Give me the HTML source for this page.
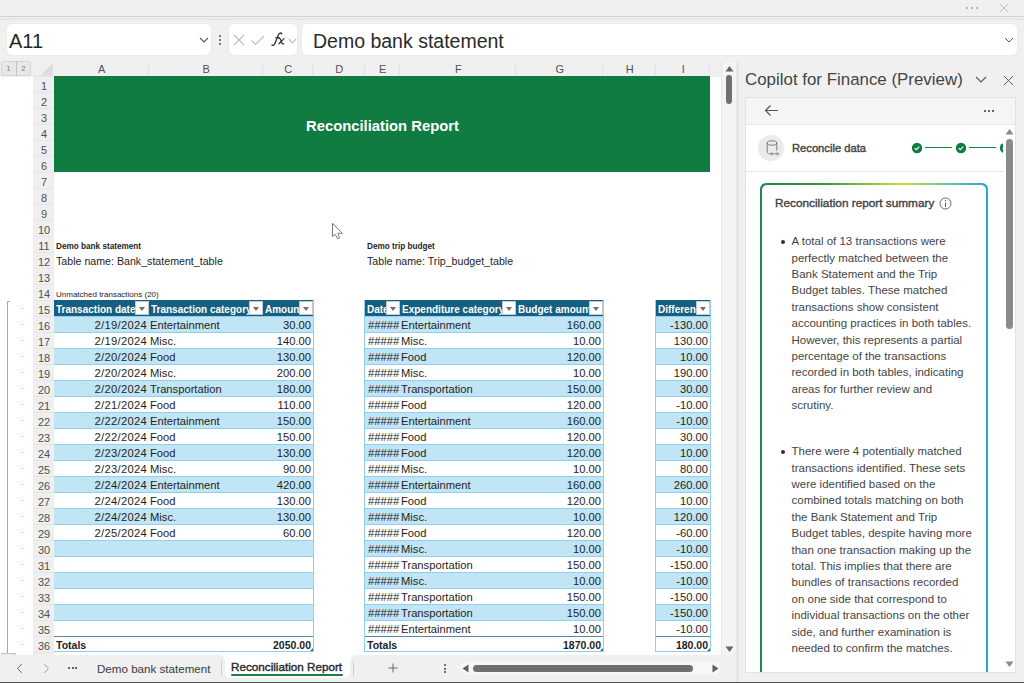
<!DOCTYPE html><html><head><meta charset='utf-8'><style>
*{margin:0;padding:0;box-sizing:border-box}
html,body{width:1024px;height:683px;overflow:hidden;background:#f0f0f0;font-family:"Liberation Sans", sans-serif;color:#242424}
.a{position:absolute;white-space:nowrap}
.cell{position:absolute;height:16px;line-height:16px;padding-top:1px;font-size:11.2px;white-space:nowrap;overflow:hidden;color:#1e1e1e}
.r{text-align:right}
.hdr{font-weight:bold;color:#fff;font-size:10px;line-height:17.5px}
.dd{position:absolute;width:14px;height:14px;background:#fff;border:1px solid #c8c8c8}
.dd:after{content:"";position:absolute;left:3px;top:5px;border-left:3.5px solid transparent;border-right:3.5px solid transparent;border-top:4px solid #707070}
.rn{position:absolute;left:33px;width:21px;height:16px;line-height:16px;padding-top:1px;font-size:11px;text-align:center;padding-left:1px;color:#505050;border-top:1px solid #e6e6e6}
.cl{position:absolute;top:62px;height:15px;line-height:15px;padding-left:1.5px;font-size:11px;text-align:center;color:#505050;border-right:1px solid #e3e3e3}
.dot{position:absolute;left:22px;width:1px;height:1px;background:#9a9a9a}
</style></head><body>
<div class="a" style="left:0;top:0;width:1024px;height:17px;background:#f0f0f0;border-bottom:1px solid #d2d2d2"></div>
<div class="a" style="left:0;top:18px;width:1024px;height:3px;background:linear-gradient(#e2e2e2,#f0f0f0)"></div>
<div class="a" style="left:966px;top:7px;width:2px;height:2px;background:#9d9d9d;border-radius:1px"></div>
<div class="a" style="left:971px;top:7px;width:2px;height:2px;background:#9d9d9d;border-radius:1px"></div>
<div class="a" style="left:976px;top:7px;width:2px;height:2px;background:#9d9d9d;border-radius:1px"></div>
<svg class="a" style="left:999px;top:3px" width="10" height="10" viewBox="0 0 10 10"><path d="M1 1L9 9M9 1L1 9" stroke="#b4b4b4" stroke-width="0.9"/></svg>
<div class="a" style="left:7px;top:24px;width:204px;height:31px;background:#fff;border-radius:5px;box-shadow:0 0 0 0.5px #e6e6e6"></div>
<div class="a" style="left:9px;top:26px;height:31px;line-height:31px;font-size:20px;color:#262626">A11</div>
<svg class="a" style="left:199px;top:37px" width="10" height="6" viewBox="0 0 10 6"><path d="M1 1L5 5L9 1" stroke="#555" stroke-width="1.1" fill="none"/></svg>
<div class="a" style="left:219px;top:35px;width:2px;height:2px;background:#555;border-radius:1px"></div>
<div class="a" style="left:219px;top:39px;width:2px;height:2px;background:#555;border-radius:1px"></div>
<div class="a" style="left:219px;top:43px;width:2px;height:2px;background:#555;border-radius:1px"></div>
<div class="a" style="left:229px;top:24px;width:68px;height:31px;background:#fff;border-radius:5px;box-shadow:0 0 0 0.5px #e6e6e6"></div>
<svg class="a" style="left:232px;top:33px" width="14" height="14" viewBox="0 0 14 14"><path d="M2 2L12 12M12 2L2 12" stroke="#bdbdbd" stroke-width="1.1"/></svg>
<svg class="a" style="left:250px;top:33px" width="16" height="14" viewBox="0 0 16 14"><path d="M1.5 7.5L5.5 11.5L14 3" stroke="#bdbdbd" stroke-width="1.1" fill="none"/></svg>
<svg class="a" style="left:268px;top:31px" width="20" height="17" viewBox="0 0 20 17"><path d="M13.8 2.8C13.2 1.8 11.4 1.6 10.6 3.2L6.9 12.6C6.3 14.2 5 14.9 3.9 14.1" stroke="#2e2e2e" stroke-width="1.3" fill="none" stroke-linecap="round"/><path d="M7.4 6.6H11.6" stroke="#2e2e2e" stroke-width="1.1"/><path d="M10.9 7.4C11.7 7.2 12.3 7.6 12.7 8.8L13.9 12.2C14.3 13.2 15 13.3 15.8 12.6M16.1 7.6C15.1 8.4 13.1 10.6 10.9 12.8" stroke="#2e2e2e" stroke-width="1.15" fill="none" stroke-linecap="round"/></svg>
<svg class="a" style="left:287.5px;top:37.5px" width="9" height="6" viewBox="0 0 9 6"><path d="M0.7 1L4.5 4.8L8.3 1" stroke="#888" stroke-width="0.9" fill="none"/></svg>
<div class="a" style="left:302px;top:24px;width:715px;height:31px;background:#fff;border-radius:5px;box-shadow:0 0 0 0.5px #e6e6e6"></div>
<div class="a" style="left:313px;top:26px;height:31px;line-height:31px;font-size:19.5px;color:#2a2a2a">Demo bank statement</div>
<svg class="a" style="left:1004px;top:37px" width="10" height="6" viewBox="0 0 10 6"><path d="M1 1L5 5L9 1" stroke="#555" stroke-width="1" fill="none"/></svg>
<div class="a" style="left:0;top:77px;width:33px;height:578px;background:#fff"></div>
<div class="a" style="left:1px;top:61px;width:30px;height:15px;background:#e8e8e8;border:1px solid #d4d4d4;border-radius:2px"></div>
<div class="a" style="left:16px;top:61px;width:1px;height:15px;background:#c4c4c4"></div>
<div class="a" style="left:1px;top:61px;width:15px;height:15px;line-height:15px;text-align:center;font-size:7px;color:#777">1</div>
<div class="a" style="left:16px;top:61px;width:15px;height:15px;line-height:15px;text-align:center;font-size:7px;color:#777">2</div>
<div class="a" style="left:33px;top:62px;width:21px;height:593px;background:#efefef"></div>
<svg class="a" style="left:40px;top:63px" width="13" height="13" viewBox="0 0 13 13"><path d="M13 0L13 13L0 13Z" fill="#dedede"/></svg>
<div class="a" style="left:54px;top:77px;width:667px;height:578px;background:#fff"></div>
<div class="cl" style="left:54px;width:95px;">A</div>
<div class="cl" style="left:149px;width:114px;">B</div>
<div class="cl" style="left:263px;width:50px;">C</div>
<div class="cl" style="left:313px;width:52px;">D</div>
<div class="cl" style="left:365px;width:35px;">E</div>
<div class="cl" style="left:400px;width:116px;">F</div>
<div class="cl" style="left:516px;width:87px;">G</div>
<div class="cl" style="left:603px;width:53px;">H</div>
<div class="cl" style="left:656px;width:54px;">I</div>
<div class="cl" style="left:710px;width:11px;border-right:none"></div>
<div class="rn" style="top:76px">1</div>
<div class="rn" style="top:92px">2</div>
<div class="rn" style="top:108px">3</div>
<div class="rn" style="top:124px">4</div>
<div class="rn" style="top:140px">5</div>
<div class="rn" style="top:156px">6</div>
<div class="rn" style="top:172px">7</div>
<div class="rn" style="top:188px">8</div>
<div class="rn" style="top:204px">9</div>
<div class="rn" style="top:220px">10</div>
<div class="rn" style="top:236px">11</div>
<div class="rn" style="top:252px">12</div>
<div class="rn" style="top:268px">13</div>
<div class="rn" style="top:284px">14</div>
<div class="rn" style="top:300px">15</div>
<div class="rn" style="top:316px">16</div>
<div class="rn" style="top:332px">17</div>
<div class="rn" style="top:348px">18</div>
<div class="rn" style="top:364px">19</div>
<div class="rn" style="top:380px">20</div>
<div class="rn" style="top:396px">21</div>
<div class="rn" style="top:412px">22</div>
<div class="rn" style="top:428px">23</div>
<div class="rn" style="top:444px">24</div>
<div class="rn" style="top:460px">25</div>
<div class="rn" style="top:476px">26</div>
<div class="rn" style="top:492px">27</div>
<div class="rn" style="top:508px">28</div>
<div class="rn" style="top:524px">29</div>
<div class="rn" style="top:540px">30</div>
<div class="rn" style="top:556px">31</div>
<div class="rn" style="top:572px">32</div>
<div class="rn" style="top:588px">33</div>
<div class="rn" style="top:604px">34</div>
<div class="rn" style="top:620px">35</div>
<div class="rn" style="top:636px">36</div>
<div class="rn" style="top:652px">37</div>
<div class="a" style="left:54px;top:76px;width:656px;height:96px;background:#107c41"></div>
<div class="a" style="left:54px;top:76px;width:656px;height:96px;line-height:96px;text-align:center;font-weight:bold;font-size:14.8px;color:#fff;padding-left:1px;padding-top:1.5px">Reconciliation Report</div>
<div class="cell" style="left:56px;top:238px;font-size:8.2px;font-weight:bold">Demo bank statement</div>
<div class="cell" style="left:56px;top:252px;font-size:10.65px">Table name: Bank_statement_table</div>
<div class="cell" style="left:56px;top:285.5px;font-size:8px">Unmatched transactions (20)</div>
<div class="cell" style="left:367px;top:238px;font-size:8.2px;font-weight:bold">Demo trip budget</div>
<div class="cell" style="left:367px;top:252px;font-size:10.65px">Table name: Trip_budget_table</div>
<div class="a" style="left:54px;top:300px;width:259px;height:16px;background:#156082"></div>
<div class="cell hdr" style="left:56px;top:300px;width:92px">Transaction date</div>
<div class="dd" style="left:135px;top:301px"></div>
<div class="cell hdr" style="left:151px;top:300px;width:111px">Transaction category</div>
<div class="dd" style="left:249px;top:301px"></div>
<div class="cell hdr" style="left:265px;top:300px;width:47px">Amount</div>
<div class="dd" style="left:299px;top:301px"></div>
<div class="a" style="left:54px;top:316px;width:259px;height:16px;background:#c1e5f5;border-top:1px solid #8fd0ef"></div>
<div class="cell r" style="left:54px;top:316px;width:93px"><span style="letter-spacing:0.3px">2/19/2024</span></div>
<div class="cell" style="left:150px;top:316px;width:112px">Entertainment</div>
<div class="cell r" style="left:263px;top:316px;width:48px">30.00</div>
<div class="a" style="left:54px;top:332px;width:259px;height:16px;background:#fff;border-top:1px solid #8fd0ef"></div>
<div class="cell r" style="left:54px;top:332px;width:93px"><span style="letter-spacing:0.3px">2/19/2024</span></div>
<div class="cell" style="left:150px;top:332px;width:112px">Misc.</div>
<div class="cell r" style="left:263px;top:332px;width:48px">140.00</div>
<div class="a" style="left:54px;top:348px;width:259px;height:16px;background:#c1e5f5;border-top:1px solid #8fd0ef"></div>
<div class="cell r" style="left:54px;top:348px;width:93px"><span style="letter-spacing:0.3px">2/20/2024</span></div>
<div class="cell" style="left:150px;top:348px;width:112px">Food</div>
<div class="cell r" style="left:263px;top:348px;width:48px">130.00</div>
<div class="a" style="left:54px;top:364px;width:259px;height:16px;background:#fff;border-top:1px solid #8fd0ef"></div>
<div class="cell r" style="left:54px;top:364px;width:93px"><span style="letter-spacing:0.3px">2/20/2024</span></div>
<div class="cell" style="left:150px;top:364px;width:112px">Misc.</div>
<div class="cell r" style="left:263px;top:364px;width:48px">200.00</div>
<div class="a" style="left:54px;top:380px;width:259px;height:16px;background:#c1e5f5;border-top:1px solid #8fd0ef"></div>
<div class="cell r" style="left:54px;top:380px;width:93px"><span style="letter-spacing:0.3px">2/20/2024</span></div>
<div class="cell" style="left:150px;top:380px;width:112px">Transportation</div>
<div class="cell r" style="left:263px;top:380px;width:48px">180.00</div>
<div class="a" style="left:54px;top:396px;width:259px;height:16px;background:#fff;border-top:1px solid #8fd0ef"></div>
<div class="cell r" style="left:54px;top:396px;width:93px"><span style="letter-spacing:0.3px">2/21/2024</span></div>
<div class="cell" style="left:150px;top:396px;width:112px">Food</div>
<div class="cell r" style="left:263px;top:396px;width:48px">110.00</div>
<div class="a" style="left:54px;top:412px;width:259px;height:16px;background:#c1e5f5;border-top:1px solid #8fd0ef"></div>
<div class="cell r" style="left:54px;top:412px;width:93px"><span style="letter-spacing:0.3px">2/22/2024</span></div>
<div class="cell" style="left:150px;top:412px;width:112px">Entertainment</div>
<div class="cell r" style="left:263px;top:412px;width:48px">150.00</div>
<div class="a" style="left:54px;top:428px;width:259px;height:16px;background:#fff;border-top:1px solid #8fd0ef"></div>
<div class="cell r" style="left:54px;top:428px;width:93px"><span style="letter-spacing:0.3px">2/22/2024</span></div>
<div class="cell" style="left:150px;top:428px;width:112px">Food</div>
<div class="cell r" style="left:263px;top:428px;width:48px">150.00</div>
<div class="a" style="left:54px;top:444px;width:259px;height:16px;background:#c1e5f5;border-top:1px solid #8fd0ef"></div>
<div class="cell r" style="left:54px;top:444px;width:93px"><span style="letter-spacing:0.3px">2/23/2024</span></div>
<div class="cell" style="left:150px;top:444px;width:112px">Food</div>
<div class="cell r" style="left:263px;top:444px;width:48px">130.00</div>
<div class="a" style="left:54px;top:460px;width:259px;height:16px;background:#fff;border-top:1px solid #8fd0ef"></div>
<div class="cell r" style="left:54px;top:460px;width:93px"><span style="letter-spacing:0.3px">2/23/2024</span></div>
<div class="cell" style="left:150px;top:460px;width:112px">Misc.</div>
<div class="cell r" style="left:263px;top:460px;width:48px">90.00</div>
<div class="a" style="left:54px;top:476px;width:259px;height:16px;background:#c1e5f5;border-top:1px solid #8fd0ef"></div>
<div class="cell r" style="left:54px;top:476px;width:93px"><span style="letter-spacing:0.3px">2/24/2024</span></div>
<div class="cell" style="left:150px;top:476px;width:112px">Entertainment</div>
<div class="cell r" style="left:263px;top:476px;width:48px">420.00</div>
<div class="a" style="left:54px;top:492px;width:259px;height:16px;background:#fff;border-top:1px solid #8fd0ef"></div>
<div class="cell r" style="left:54px;top:492px;width:93px"><span style="letter-spacing:0.3px">2/24/2024</span></div>
<div class="cell" style="left:150px;top:492px;width:112px">Food</div>
<div class="cell r" style="left:263px;top:492px;width:48px">130.00</div>
<div class="a" style="left:54px;top:508px;width:259px;height:16px;background:#c1e5f5;border-top:1px solid #8fd0ef"></div>
<div class="cell r" style="left:54px;top:508px;width:93px"><span style="letter-spacing:0.3px">2/24/2024</span></div>
<div class="cell" style="left:150px;top:508px;width:112px">Misc.</div>
<div class="cell r" style="left:263px;top:508px;width:48px">130.00</div>
<div class="a" style="left:54px;top:524px;width:259px;height:16px;background:#fff;border-top:1px solid #8fd0ef"></div>
<div class="cell r" style="left:54px;top:524px;width:93px"><span style="letter-spacing:0.3px">2/25/2024</span></div>
<div class="cell" style="left:150px;top:524px;width:112px">Food</div>
<div class="cell r" style="left:263px;top:524px;width:48px">60.00</div>
<div class="a" style="left:54px;top:540px;width:259px;height:16px;background:#c1e5f5;border-top:1px solid #8fd0ef"></div>
<div class="a" style="left:54px;top:556px;width:259px;height:16px;background:#fff;border-top:1px solid #8fd0ef"></div>
<div class="a" style="left:54px;top:572px;width:259px;height:16px;background:#c1e5f5;border-top:1px solid #8fd0ef"></div>
<div class="a" style="left:54px;top:588px;width:259px;height:16px;background:#fff;border-top:1px solid #8fd0ef"></div>
<div class="a" style="left:54px;top:604px;width:259px;height:16px;background:#c1e5f5;border-top:1px solid #8fd0ef"></div>
<div class="a" style="left:54px;top:620px;width:259px;height:16px;background:#fff;border-top:1px solid #8fd0ef"></div>
<div class="a" style="left:54px;top:636px;width:259px;height:16px;background:#fff;border-top:1px solid #5a86a0;border-bottom:1px solid #8fd0ef"></div>
<div class="cell" style="left:56px;top:636px;width:93px;font-weight:bold;font-size:10.5px">Totals</div>
<div class="cell r" style="left:263px;top:636px;width:48px;font-weight:bold;font-size:10.5px">2050.00</div>
<div class="a" style="left:313px;top:300px;width:1px;height:352px;background:#8fd0ef"></div>
<div class="a" style="left:310px;top:648px;width:0;height:0;border-left:3px solid transparent;border-bottom:3px solid #2f6ea8"></div>
<div class="a" style="left:365px;top:300px;width:238px;height:16px;background:#156082"></div>
<div class="cell hdr" style="left:367px;top:300px;width:32px">Date</div>
<div class="dd" style="left:386px;top:301px"></div>
<div class="cell hdr" style="left:402px;top:300px;width:113px">Expenditure category</div>
<div class="dd" style="left:502px;top:301px"></div>
<div class="cell hdr" style="left:518px;top:300px;width:84px">Budget amount</div>
<div class="dd" style="left:589px;top:301px"></div>
<div class="a" style="left:365px;top:316px;width:238px;height:16px;background:#c1e5f5;border-top:1px solid #8fd0ef"></div>
<div class="cell" style="left:368px;top:316px;width:33px">#####</div>
<div class="cell" style="left:401px;top:316px;width:114px">Entertainment</div>
<div class="cell r" style="left:516px;top:316px;width:85px">160.00</div>
<div class="a" style="left:365px;top:332px;width:238px;height:16px;background:#fff;border-top:1px solid #8fd0ef"></div>
<div class="cell" style="left:368px;top:332px;width:33px">#####</div>
<div class="cell" style="left:401px;top:332px;width:114px">Misc.</div>
<div class="cell r" style="left:516px;top:332px;width:85px">10.00</div>
<div class="a" style="left:365px;top:348px;width:238px;height:16px;background:#c1e5f5;border-top:1px solid #8fd0ef"></div>
<div class="cell" style="left:368px;top:348px;width:33px">#####</div>
<div class="cell" style="left:401px;top:348px;width:114px">Food</div>
<div class="cell r" style="left:516px;top:348px;width:85px">120.00</div>
<div class="a" style="left:365px;top:364px;width:238px;height:16px;background:#fff;border-top:1px solid #8fd0ef"></div>
<div class="cell" style="left:368px;top:364px;width:33px">#####</div>
<div class="cell" style="left:401px;top:364px;width:114px">Misc.</div>
<div class="cell r" style="left:516px;top:364px;width:85px">10.00</div>
<div class="a" style="left:365px;top:380px;width:238px;height:16px;background:#c1e5f5;border-top:1px solid #8fd0ef"></div>
<div class="cell" style="left:368px;top:380px;width:33px">#####</div>
<div class="cell" style="left:401px;top:380px;width:114px">Transportation</div>
<div class="cell r" style="left:516px;top:380px;width:85px">150.00</div>
<div class="a" style="left:365px;top:396px;width:238px;height:16px;background:#fff;border-top:1px solid #8fd0ef"></div>
<div class="cell" style="left:368px;top:396px;width:33px">#####</div>
<div class="cell" style="left:401px;top:396px;width:114px">Food</div>
<div class="cell r" style="left:516px;top:396px;width:85px">120.00</div>
<div class="a" style="left:365px;top:412px;width:238px;height:16px;background:#c1e5f5;border-top:1px solid #8fd0ef"></div>
<div class="cell" style="left:368px;top:412px;width:33px">#####</div>
<div class="cell" style="left:401px;top:412px;width:114px">Entertainment</div>
<div class="cell r" style="left:516px;top:412px;width:85px">160.00</div>
<div class="a" style="left:365px;top:428px;width:238px;height:16px;background:#fff;border-top:1px solid #8fd0ef"></div>
<div class="cell" style="left:368px;top:428px;width:33px">#####</div>
<div class="cell" style="left:401px;top:428px;width:114px">Food</div>
<div class="cell r" style="left:516px;top:428px;width:85px">120.00</div>
<div class="a" style="left:365px;top:444px;width:238px;height:16px;background:#c1e5f5;border-top:1px solid #8fd0ef"></div>
<div class="cell" style="left:368px;top:444px;width:33px">#####</div>
<div class="cell" style="left:401px;top:444px;width:114px">Food</div>
<div class="cell r" style="left:516px;top:444px;width:85px">120.00</div>
<div class="a" style="left:365px;top:460px;width:238px;height:16px;background:#fff;border-top:1px solid #8fd0ef"></div>
<div class="cell" style="left:368px;top:460px;width:33px">#####</div>
<div class="cell" style="left:401px;top:460px;width:114px">Misc.</div>
<div class="cell r" style="left:516px;top:460px;width:85px">10.00</div>
<div class="a" style="left:365px;top:476px;width:238px;height:16px;background:#c1e5f5;border-top:1px solid #8fd0ef"></div>
<div class="cell" style="left:368px;top:476px;width:33px">#####</div>
<div class="cell" style="left:401px;top:476px;width:114px">Entertainment</div>
<div class="cell r" style="left:516px;top:476px;width:85px">160.00</div>
<div class="a" style="left:365px;top:492px;width:238px;height:16px;background:#fff;border-top:1px solid #8fd0ef"></div>
<div class="cell" style="left:368px;top:492px;width:33px">#####</div>
<div class="cell" style="left:401px;top:492px;width:114px">Food</div>
<div class="cell r" style="left:516px;top:492px;width:85px">120.00</div>
<div class="a" style="left:365px;top:508px;width:238px;height:16px;background:#c1e5f5;border-top:1px solid #8fd0ef"></div>
<div class="cell" style="left:368px;top:508px;width:33px">#####</div>
<div class="cell" style="left:401px;top:508px;width:114px">Misc.</div>
<div class="cell r" style="left:516px;top:508px;width:85px">10.00</div>
<div class="a" style="left:365px;top:524px;width:238px;height:16px;background:#fff;border-top:1px solid #8fd0ef"></div>
<div class="cell" style="left:368px;top:524px;width:33px">#####</div>
<div class="cell" style="left:401px;top:524px;width:114px">Food</div>
<div class="cell r" style="left:516px;top:524px;width:85px">120.00</div>
<div class="a" style="left:365px;top:540px;width:238px;height:16px;background:#c1e5f5;border-top:1px solid #8fd0ef"></div>
<div class="cell" style="left:368px;top:540px;width:33px">#####</div>
<div class="cell" style="left:401px;top:540px;width:114px">Misc.</div>
<div class="cell r" style="left:516px;top:540px;width:85px">10.00</div>
<div class="a" style="left:365px;top:556px;width:238px;height:16px;background:#fff;border-top:1px solid #8fd0ef"></div>
<div class="cell" style="left:368px;top:556px;width:33px">#####</div>
<div class="cell" style="left:401px;top:556px;width:114px">Transportation</div>
<div class="cell r" style="left:516px;top:556px;width:85px">150.00</div>
<div class="a" style="left:365px;top:572px;width:238px;height:16px;background:#c1e5f5;border-top:1px solid #8fd0ef"></div>
<div class="cell" style="left:368px;top:572px;width:33px">#####</div>
<div class="cell" style="left:401px;top:572px;width:114px">Misc.</div>
<div class="cell r" style="left:516px;top:572px;width:85px">10.00</div>
<div class="a" style="left:365px;top:588px;width:238px;height:16px;background:#fff;border-top:1px solid #8fd0ef"></div>
<div class="cell" style="left:368px;top:588px;width:33px">#####</div>
<div class="cell" style="left:401px;top:588px;width:114px">Transportation</div>
<div class="cell r" style="left:516px;top:588px;width:85px">150.00</div>
<div class="a" style="left:365px;top:604px;width:238px;height:16px;background:#c1e5f5;border-top:1px solid #8fd0ef"></div>
<div class="cell" style="left:368px;top:604px;width:33px">#####</div>
<div class="cell" style="left:401px;top:604px;width:114px">Transportation</div>
<div class="cell r" style="left:516px;top:604px;width:85px">150.00</div>
<div class="a" style="left:365px;top:620px;width:238px;height:16px;background:#fff;border-top:1px solid #8fd0ef"></div>
<div class="cell" style="left:368px;top:620px;width:33px">#####</div>
<div class="cell" style="left:401px;top:620px;width:114px">Entertainment</div>
<div class="cell r" style="left:516px;top:620px;width:85px">10.00</div>
<div class="a" style="left:365px;top:636px;width:238px;height:16px;background:#fff;border-top:1px solid #5a86a0;border-bottom:1px solid #8fd0ef"></div>
<div class="cell" style="left:367px;top:636px;width:33px;font-weight:bold;font-size:10.5px">Totals</div>
<div class="cell r" style="left:516px;top:636px;width:85px;font-weight:bold;font-size:10.5px">1870.00</div>
<div class="a" style="left:364px;top:300px;width:1px;height:352px;background:#8fd0ef"></div>
<div class="a" style="left:603px;top:300px;width:1px;height:352px;background:#8fd0ef"></div>
<div class="a" style="left:600px;top:648px;width:0;height:0;border-left:3px solid transparent;border-bottom:3px solid #2f6ea8"></div>
<div class="a" style="left:656px;top:300px;width:54px;height:16px;background:#156082"></div>
<div class="cell hdr" style="left:658px;top:300px;width:51px">Difference</div>
<div class="dd" style="left:696px;top:301px"></div>
<div class="a" style="left:656px;top:316px;width:54px;height:16px;background:#c1e5f5;border-top:1px solid #8fd0ef"></div>
<div class="cell r" style="left:656px;top:316px;width:52px">-130.00</div>
<div class="a" style="left:656px;top:332px;width:54px;height:16px;background:#fff;border-top:1px solid #8fd0ef"></div>
<div class="cell r" style="left:656px;top:332px;width:52px">130.00</div>
<div class="a" style="left:656px;top:348px;width:54px;height:16px;background:#c1e5f5;border-top:1px solid #8fd0ef"></div>
<div class="cell r" style="left:656px;top:348px;width:52px">10.00</div>
<div class="a" style="left:656px;top:364px;width:54px;height:16px;background:#fff;border-top:1px solid #8fd0ef"></div>
<div class="cell r" style="left:656px;top:364px;width:52px">190.00</div>
<div class="a" style="left:656px;top:380px;width:54px;height:16px;background:#c1e5f5;border-top:1px solid #8fd0ef"></div>
<div class="cell r" style="left:656px;top:380px;width:52px">30.00</div>
<div class="a" style="left:656px;top:396px;width:54px;height:16px;background:#fff;border-top:1px solid #8fd0ef"></div>
<div class="cell r" style="left:656px;top:396px;width:52px">-10.00</div>
<div class="a" style="left:656px;top:412px;width:54px;height:16px;background:#c1e5f5;border-top:1px solid #8fd0ef"></div>
<div class="cell r" style="left:656px;top:412px;width:52px">-10.00</div>
<div class="a" style="left:656px;top:428px;width:54px;height:16px;background:#fff;border-top:1px solid #8fd0ef"></div>
<div class="cell r" style="left:656px;top:428px;width:52px">30.00</div>
<div class="a" style="left:656px;top:444px;width:54px;height:16px;background:#c1e5f5;border-top:1px solid #8fd0ef"></div>
<div class="cell r" style="left:656px;top:444px;width:52px">10.00</div>
<div class="a" style="left:656px;top:460px;width:54px;height:16px;background:#fff;border-top:1px solid #8fd0ef"></div>
<div class="cell r" style="left:656px;top:460px;width:52px">80.00</div>
<div class="a" style="left:656px;top:476px;width:54px;height:16px;background:#c1e5f5;border-top:1px solid #8fd0ef"></div>
<div class="cell r" style="left:656px;top:476px;width:52px">260.00</div>
<div class="a" style="left:656px;top:492px;width:54px;height:16px;background:#fff;border-top:1px solid #8fd0ef"></div>
<div class="cell r" style="left:656px;top:492px;width:52px">10.00</div>
<div class="a" style="left:656px;top:508px;width:54px;height:16px;background:#c1e5f5;border-top:1px solid #8fd0ef"></div>
<div class="cell r" style="left:656px;top:508px;width:52px">120.00</div>
<div class="a" style="left:656px;top:524px;width:54px;height:16px;background:#fff;border-top:1px solid #8fd0ef"></div>
<div class="cell r" style="left:656px;top:524px;width:52px">-60.00</div>
<div class="a" style="left:656px;top:540px;width:54px;height:16px;background:#c1e5f5;border-top:1px solid #8fd0ef"></div>
<div class="cell r" style="left:656px;top:540px;width:52px">-10.00</div>
<div class="a" style="left:656px;top:556px;width:54px;height:16px;background:#fff;border-top:1px solid #8fd0ef"></div>
<div class="cell r" style="left:656px;top:556px;width:52px">-150.00</div>
<div class="a" style="left:656px;top:572px;width:54px;height:16px;background:#c1e5f5;border-top:1px solid #8fd0ef"></div>
<div class="cell r" style="left:656px;top:572px;width:52px">-10.00</div>
<div class="a" style="left:656px;top:588px;width:54px;height:16px;background:#fff;border-top:1px solid #8fd0ef"></div>
<div class="cell r" style="left:656px;top:588px;width:52px">-150.00</div>
<div class="a" style="left:656px;top:604px;width:54px;height:16px;background:#c1e5f5;border-top:1px solid #8fd0ef"></div>
<div class="cell r" style="left:656px;top:604px;width:52px">-150.00</div>
<div class="a" style="left:656px;top:620px;width:54px;height:16px;background:#fff;border-top:1px solid #8fd0ef"></div>
<div class="cell r" style="left:656px;top:620px;width:52px">-10.00</div>
<div class="a" style="left:656px;top:636px;width:54px;height:16px;background:#fff;border-top:1px solid #5a86a0;border-bottom:1px solid #8fd0ef"></div>
<div class="cell r" style="left:656px;top:636px;width:52px;font-weight:bold;font-size:10.5px">180.00</div>
<div class="a" style="left:655px;top:300px;width:1px;height:352px;background:#8fd0ef"></div>
<div class="a" style="left:710px;top:300px;width:1px;height:352px;background:#8fd0ef"></div>
<div class="a" style="left:707px;top:648px;width:0;height:0;border-left:3px solid transparent;border-bottom:3px solid #2f6ea8"></div>
<div class="a" style="left:7px;top:301px;width:1px;height:353px;background:#a8a8a8"></div>
<div class="a" style="left:7px;top:301px;width:3px;height:1px;background:#a8a8a8"></div>
<div class="a" style="left:1px;top:653px;width:15px;height:4px;border:1px solid #c8c8c8;border-bottom:none;background:#ececec"></div>
<div class="dot" style="top:308px"></div>
<div class="dot" style="top:324px"></div>
<div class="dot" style="top:340px"></div>
<div class="dot" style="top:356px"></div>
<div class="dot" style="top:372px"></div>
<div class="dot" style="top:388px"></div>
<div class="dot" style="top:404px"></div>
<div class="dot" style="top:420px"></div>
<div class="dot" style="top:436px"></div>
<div class="dot" style="top:452px"></div>
<div class="dot" style="top:468px"></div>
<div class="dot" style="top:484px"></div>
<div class="dot" style="top:500px"></div>
<div class="dot" style="top:516px"></div>
<div class="dot" style="top:532px"></div>
<div class="dot" style="top:548px"></div>
<div class="dot" style="top:564px"></div>
<div class="dot" style="top:580px"></div>
<div class="dot" style="top:596px"></div>
<div class="dot" style="top:612px"></div>
<div class="dot" style="top:628px"></div>
<div class="dot" style="top:644px"></div>
<svg class="a" style="left:330px;top:221px" width="16" height="20" viewBox="0 0 16 20"><path d="M2.5 2.3L2.5 15.5L5.2 13.3L7.6 17.8L9.6 17L7.9 12.3L12.4 12.3Z" fill="#fff" stroke="#6a6a6a" stroke-width="0.9" stroke-linejoin="round"/></svg>
<div class="a" style="left:721px;top:62px;width:15px;height:593px;background:#f4f4f4;border-radius:0 0 7px 7px"></div>
<div class="a" style="left:720.5px;top:62px;width:1px;height:592px;background:#e6e6e6"></div>
<svg class="a" style="left:724.5px;top:64.5px" width="9" height="7" viewBox="0 0 9 7"><path d="M0.5 6.5L4.5 1L8.5 6.5Z" fill="#666"/></svg>
<div class="a" style="left:726px;top:75px;width:6px;height:29px;background:#707070;border-radius:3px"></div>
<svg class="a" style="left:724.5px;top:646px" width="9" height="7" viewBox="0 0 9 7"><path d="M0.5 0.5L4.5 6L8.5 0.5Z" fill="#666"/></svg>
<div class="a" style="left:54px;top:653px;width:667px;height:10px;background:#fff"></div>
<div class="a" style="left:215px;top:668px;width:145px;height:14px;background:#f0f0f0"></div>
<div class="a" style="left:225px;top:655px;width:125px;height:23px;background:#fff;border-radius:0 0 6px 6px"></div>
<div class="a" style="left:0;top:655px;width:225px;height:27px;background:#f0f0f0;border-radius:0 6px 0 0"></div>
<div class="a" style="left:350px;top:655px;width:387px;height:27px;background:#f0f0f0;border-radius:6px 0 0 0"></div>
<div class="a" style="left:0;top:681.5px;width:1024px;height:1.5px;background:#505050"></div>
<svg class="a" style="left:16px;top:663px" width="7" height="11" viewBox="0 0 7 11"><path d="M5.8 1L1.5 5.5L5.8 10" stroke="#6a6a6a" stroke-width="1" fill="none"/></svg>
<svg class="a" style="left:43px;top:663px" width="7" height="11" viewBox="0 0 7 11"><path d="M1.2 1L5.5 5.5L1.2 10" stroke="#a0a0a0" stroke-width="1" fill="none"/></svg>
<div class="a" style="left:68px;top:667px;width:2px;height:2px;background:#333;border-radius:1px"></div>
<div class="a" style="left:71.5px;top:667px;width:2px;height:2px;background:#333;border-radius:1px"></div>
<div class="a" style="left:75px;top:667px;width:2px;height:2px;background:#333;border-radius:1px"></div>
<div class="a" style="left:97px;top:661px;line-height:16px;font-size:11.6px;color:#3a3a3a">Demo bank statement</div>
<div class="a" style="left:221px;top:661px;width:1px;height:15px;background:#cfcfcf"></div>
<div class="a" style="left:231px;top:659px;line-height:16px;font-size:11.7px;color:#2a2a2a;-webkit-text-stroke:0.4px #2a2a2a">Reconciliation Report</div>
<div class="a" style="left:231px;top:674px;width:112px;height:2px;background:#1a8048;border-radius:1px"></div>
<div class="a" style="left:353px;top:661px;width:1px;height:15px;background:#cfcfcf"></div>
<svg class="a" style="left:388px;top:663px" width="10" height="10" viewBox="0 0 10 10"><path d="M5 0.5V9.5M0.5 5H9.5" stroke="#666" stroke-width="1"/></svg>
<div class="a" style="left:444px;top:664px;width:2px;height:2px;background:#444;border-radius:1px"></div>
<div class="a" style="left:444px;top:667.5px;width:2px;height:2px;background:#444;border-radius:1px"></div>
<div class="a" style="left:444px;top:671px;width:2px;height:2px;background:#444;border-radius:1px"></div>
<div class="a" style="left:460px;top:662px;width:261px;height:13px;background:#f7f7f7;border-radius:6.5px"></div>
<svg class="a" style="left:462px;top:664px" width="7" height="9" viewBox="0 0 7 9"><path d="M6.5 0.5L0.5 4.5L6.5 8.5Z" fill="#606060"/></svg>
<div class="a" style="left:473px;top:665px;width:220px;height:7px;background:#707070;border-radius:3.5px"></div>
<svg class="a" style="left:712px;top:664px" width="7" height="9" viewBox="0 0 7 9"><path d="M0.5 0.5L6.5 4.5L0.5 8.5Z" fill="#606060"/></svg>
<div class="a" style="left:737px;top:62px;width:287px;height:619px;background:#f0f0f0"></div>
<div class="a" style="left:735.5px;top:62px;width:3px;height:620px;background:linear-gradient(90deg,#f0f0f0,#e2e2e2,#f0f0f0)"></div>
<div class="a" style="left:745px;top:62.5px;height:34px;line-height:34px;font-size:16.9px;color:#444">Copilot for Finance (Preview)</div>
<svg class="a" style="left:975px;top:76px" width="12" height="7" viewBox="0 0 12 7"><path d="M1 1L6 6L11 1" stroke="#555" stroke-width="1.1" fill="none"/></svg>
<svg class="a" style="left:1003px;top:74.5px" width="11" height="11" viewBox="0 0 11 11"><path d="M1 1L10 10M10 1L1 10" stroke="#555" stroke-width="0.95"/></svg>
<div class="a" style="left:745px;top:97px;width:271px;height:576px;background:#fff;border:1px solid #e3e3e3"></div>
<div class="a" style="left:746px;top:98px;width:269px;height:27px;background:#f5f5f5;border-bottom:1px solid #e6e6e6"></div>
<svg class="a" style="left:764px;top:104px" width="15" height="13" viewBox="0 0 15 13"><path d="M14 6.5H1.5M6.5 1.5L1.5 6.5L6.5 11.5" stroke="#555" stroke-width="1.2" fill="none"/></svg>
<div class="a" style="left:984px;top:110px;width:2px;height:2px;background:#333;border-radius:1px"></div>
<div class="a" style="left:988px;top:110px;width:2px;height:2px;background:#333;border-radius:1px"></div>
<div class="a" style="left:992px;top:110px;width:2px;height:2px;background:#333;border-radius:1px"></div>
<div class="a" style="left:758px;top:135px;width:26px;height:26px;border-radius:13px;background:#ebebeb"></div>
<svg class="a" style="left:764px;top:139px" width="16" height="18" viewBox="0 0 16 18"><ellipse cx="8" cy="4" rx="4.8" ry="2.2" fill="none" stroke="#707070" stroke-width="0.9"/><path d="M3.2 4V12.8C3.2 13.8 4 14.6 5.5 14.8M12.8 4V11.5" fill="none" stroke="#707070" stroke-width="0.9"/><path d="M6.5 14.8H14.5M8 13.3L6.5 14.8L8 16.3M13 13.3L14.5 14.8L13 16.3" fill="none" stroke="#707070" stroke-width="0.9"/></svg>
<div class="a" style="left:792px;top:139px;line-height:18px;font-size:11.2px;color:#444;-webkit-text-stroke:0.4px #444">Reconcile data</div>
<svg class="a" style="left:911px;top:142px" width="12" height="12" viewBox="0 0 12 12"><circle cx="6" cy="6" r="5.2" fill="#107c41"/><path d="M3.7 6.1L5.3 7.6L8.3 4.6" stroke="#fff" stroke-width="1.15" fill="none"/></svg>
<div class="a" style="left:925px;top:147px;width:27px;height:1.3px;background:#1a8048"></div>
<svg class="a" style="left:954.5px;top:142px" width="12" height="12" viewBox="0 0 12 12"><circle cx="6" cy="6" r="5.2" fill="#107c41"/><path d="M3.7 6.1L5.3 7.6L8.3 4.6" stroke="#fff" stroke-width="1.15" fill="none"/></svg>
<div class="a" style="left:968.5px;top:147px;width:27px;height:1.3px;background:#1a8048"></div>
<div class="a" style="left:746px;top:98px;width:257px;height:574px;overflow:hidden;pointer-events:none"><svg style="position:absolute;left:252.5px;top:44px" width="12" height="12" viewBox="0 0 12 12"><circle cx="6" cy="6" r="5.2" fill="#107c41"/><path d="M3.7 6.1L5.3 7.6L8.3 4.6" stroke="#fff" stroke-width="1.15" fill="none"/></svg></div>
<div class="a" style="left:746px;top:171px;width:258px;height:1px;background:#e4e4e4"></div>
<svg class="a" style="left:1005px;top:128px" width="9" height="7" viewBox="0 0 9 7"><path d="M0.5 6.5L4.5 1L8.5 6.5Z" fill="#8a8a8a"/></svg>
<div class="a" style="left:1006px;top:139px;width:7px;height:190px;background:#8a8a8a;border-radius:3.5px"></div>
<svg class="a" style="left:1005px;top:661px" width="9" height="7" viewBox="0 0 9 7"><path d="M0.5 0.5L4.5 6L8.5 0.5Z" fill="#8a8a8a"/></svg>
<div class="a" style="left:760px;top:183px;width:228px;height:489px;border-radius:6px 6px 0 0;background:linear-gradient(90deg,#1f8a4c 0%,#3a9a44 30%,#c6e03a 62%,#5cc0b0 85%,#2aa9b9 100%);"></div>
<div class="a" style="left:762px;top:185px;width:224px;height:487px;border-radius:5px 5px 0 0;background:#fff"></div>
<div class="a" style="left:775px;top:194px;line-height:18px;font-size:11.8px;color:#444;-webkit-text-stroke:0.4px #444">Reconciliation report summary</div>
<svg class="a" style="left:939px;top:197px" width="13" height="13" viewBox="0 0 13 13"><circle cx="6.5" cy="6.5" r="5.5" fill="none" stroke="#555" stroke-width="0.9"/><path d="M6.5 5.6V9.8" stroke="#555" stroke-width="1"/><circle cx="6.5" cy="3.8" r="0.7" fill="#555"/></svg>
<div class="a" style="left:791.5px;top:233.20px;font-size:11.5px;line-height:16.4px;color:#444">A total of 13 transactions were<br>perfectly matched between the<br>Bank Statement and the Trip<br>Budget tables. These matched<br>transactions show consistent<br>accounting practices in both tables.<br>However, this represents a partial<br>percentage of the transactions<br>recorded in both tables, indicating<br>areas for further review and<br>scrutiny.</div>
<div class="a" style="left:780.5px;top:239.70px;width:4px;height:4px;border-radius:2px;background:#333"></div>
<div class="a" style="left:791.5px;top:443.10px;font-size:11.5px;line-height:16.4px;color:#444">There were 4 potentially matched<br>transactions identified. These sets<br>were identified based on the<br>combined totals matching on both<br>the Bank Statement and Trip<br>Budget tables, despite having more<br>than one transaction making up the<br>total. This implies that there are<br>bundles of transactions recorded<br>on one side that correspond to<br>individual transactions on the other<br>side, and further examination is<br>needed to confirm the matches.</div>
<div class="a" style="left:780.5px;top:449.60px;width:4px;height:4px;border-radius:2px;background:#333"></div>
</body></html>
